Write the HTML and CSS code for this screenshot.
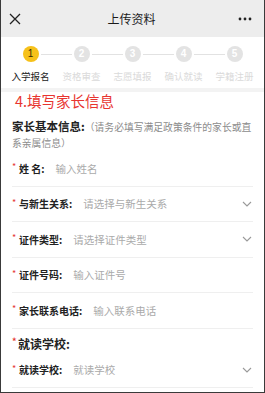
FILE: index.html
```html
<!DOCTYPE html>
<html lang="zh">
<head>
<meta charset="utf-8">
<title>上传资料</title>
<link rel="stylesheet" href="styles.css">
</head>
<body>
<div class="page">
  <header class="nav">
    <svg class="nav-close" width="12" height="12" viewBox="0 0 12 12"><path d="M1 1L11 11M11 1L1 11" stroke="#222" stroke-width="1.3" fill="none"/></svg>
    <div class="nav-title">上传资料</div>
    <svg class="nav-more" width="14" height="4" viewBox="0 0 14 4"><circle cx="2" cy="2" r="1.4" fill="#222"/><circle cx="7" cy="2" r="1.4" fill="#222"/><circle cx="12" cy="2" r="1.4" fill="#222"/></svg>
  </header>

  <div class="steps">
    <div class="step active first">
      <div class="step-track"><span class="line"></span><span class="dot">1</span><span class="line"></span></div>
      <div class="step-label">入学报名</div>
    </div>
    <div class="step">
      <div class="step-track"><span class="line"></span><span class="dot">2</span><span class="line"></span></div>
      <div class="step-label">资格审查</div>
    </div>
    <div class="step">
      <div class="step-track"><span class="line"></span><span class="dot">3</span><span class="line"></span></div>
      <div class="step-label">志愿填报</div>
    </div>
    <div class="step">
      <div class="step-track"><span class="line"></span><span class="dot">4</span><span class="line"></span></div>
      <div class="step-label">确认就读</div>
    </div>
    <div class="step last">
      <div class="step-track"><span class="line"></span><span class="dot">5</span><span class="line"></span></div>
      <div class="step-label">学籍注册</div>
    </div>
  </div>

  <div class="band"></div>

  <div class="content">
    <h2 class="section-title">4.填写家长信息</h2>
    <p class="group-title"><b>家长基本信息:</b><span class="note">（请务必填写满足政策条件的家长或直系亲属信息）</span></p>

    <div class="row">
      <span class="star">*</span><span class="label">姓 名:</span><span class="ph">输入姓名</span>
    </div>
    <div class="row">
      <span class="star">*</span><span class="label">与新生关系:</span><span class="ph">请选择与新生关系</span>
      <svg class="chev" width="10" height="6" viewBox="0 0 10 6"><path d="M1 1L5 5L9 1" stroke="#999" stroke-width="1.1" fill="none"/></svg>
    </div>
    <div class="row">
      <span class="star">*</span><span class="label">证件类型:</span><span class="ph">请选择证件类型</span>
      <svg class="chev" width="10" height="6" viewBox="0 0 10 6"><path d="M1 1L5 5L9 1" stroke="#999" stroke-width="1.1" fill="none"/></svg>
    </div>
    <div class="row">
      <span class="star">*</span><span class="label">证件号码:</span><span class="ph">输入证件号</span>
    </div>
    <div class="row">
      <span class="star">*</span><span class="label">家长联系电话:</span><span class="ph">输入联系电话</span>
    </div>

    <div class="sub-title"><span class="star">*</span>就读学校:</div>
    <div class="row">
      <span class="star">*</span><span class="label">就读学校:</span><span class="ph">就读学校</span>
      <svg class="chev" width="10" height="6" viewBox="0 0 10 6"><path d="M1 1L5 5L9 1" stroke="#999" stroke-width="1.1" fill="none"/></svg>
    </div>
  </div>
</div>
</body>
</html>
```

FILE: styles.css
```css
* { box-sizing: border-box; }
html, body {
  margin: 0;
  padding: 0;
  background: #fff;
}
body {
  font-family: "Noto Sans CJK SC", "Noto Sans", sans-serif;
  color: #222;
}
.page {
  width: 265px;
  height: 393px;
  overflow: hidden;
  border-left: 1px solid #3a3a3a;
  border-right: 1px solid #3a3a3a;
  border-bottom: 1px solid #3a3a3a;
  background: #fff;
}
.nav {
  height: 37px;
  background: #ededed;
  display: flex;
  align-items: center;
  justify-content: space-between;
  padding: 0 12px 0 8px;
}
.nav-close { display: block; }
.nav-title {
  font-size: 12px;
  color: #1a1a1a;
  line-height: 16px;
  margin-left: 4px;
}
.nav-more { display: block; }

.steps {
  display: grid;
  grid-template-columns: repeat(5, 51px);
  padding: 9px 0 0 4px;
  height: 51px;
}
.step {
  display: flex;
  flex-direction: column;
  align-items: center;
}
.step-track {
  display: flex;
  align-items: center;
  width: 100%;
  height: 16px;
}
.step-track .line {
  flex: 1;
  height: 1px;
  background: #e2e2e2;
}
.step.first .step-track .line:first-child,
.step.last .step-track .line:last-child { background: transparent; }
.dot {
  width: 16px;
  height: 16px;
  border-radius: 50%;
  background: #e3e3e3;
  color: #fff;
  font-family: "Liberation Sans", "DejaVu Sans", sans-serif;
  font-size: 10px;
  font-weight: bold;
  line-height: 16px;
  text-align: center;
  margin: 0 2px;
}
.step.active .dot {
  background: #f6c11a;
  color: #3a2a00;
  font-weight: normal;
}
.step-label {
  margin-top: 8px;
  font-size: 9.5px;
  line-height: 13px;
  color: #dadada;
  white-space: nowrap;
}
.step.active .step-label { color: #222; }

.band {
  height: 4px;
  background: #f3f3f3;
}

.content {
  padding: 0 11px 0 11px;
}
.section-title {
  margin: 0;
  font-size: 14.5px;
  line-height: 18px;
  font-weight: normal;
  color: #e8342f;
  padding-left: 3px;
}
.group-title {
  margin: 9px 0 0 0;
  font-size: 11.5px;
  line-height: 15px;
}
.group-title b {
  font-weight: bold;
  color: #222;
}
.note {
  font-size: 9.8px;
  color: #8c8c8c;
}
.row {
  display: flex;
  align-items: center;
  height: 35.5px;
  border-bottom: 1px solid #efefef;
}
.star {
  color: #e53935;
  font-size: 9px;
  width: 6px;
  align-self: center;
  margin-top: -3px;
  margin-right: 1px;
}
.label {
  font-size: 10px;
  font-weight: bold;
  color: #222;
  margin-right: 11px;
  white-space: pre;
}
.ph {
  font-size: 10.5px;
  color: #aaa;
  flex: 1;
}
.chev {
  display: block;
  margin-right: 1px;
}
.sub-title {
  margin-top: 6px;
  font-size: 12px;
  line-height: 18px;
  font-weight: bold;
  color: #222;
  display: flex;
  align-items: center;
}
.sub-title .star { width: 5px; }
```
